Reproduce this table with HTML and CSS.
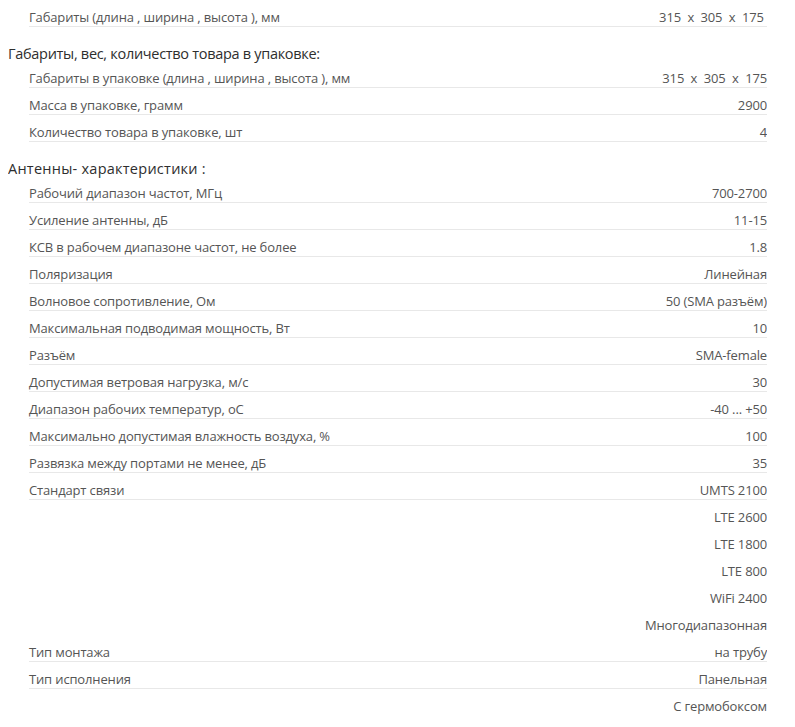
FILE: index.html
```html
<!DOCTYPE html>
<html lang="ru">
<head>
<meta charset="utf-8">
<link rel="stylesheet" href="styles.css">
</head>
<body>
<div class="specs">
  <div class="row"><span class="label">Габариты (длина , ширина , высота ), мм</span><span class="value">315 &nbsp;x &nbsp;305 &nbsp;x &nbsp;175&nbsp;</span></div>

  <h3 class="group group-tight">Габариты, вес, количество товара в упаковке:</h3>
  <div class="row"><span class="label">Габариты в упаковке (длина , ширина , высота ), мм</span><span class="value">315 &nbsp;x &nbsp;305 &nbsp;x &nbsp;175</span></div>
  <div class="row"><span class="label">Масса в упаковке, грамм</span><span class="value">2900</span></div>
  <div class="row"><span class="label">Количество товара в упаковке, шт</span><span class="value">4</span></div>

  <h3 class="group group-wide">Антенны- характеристики :</h3>
  <div class="row"><span class="label">Рабочий диапазон частот, МГц</span><span class="value">700-2700</span></div>
  <div class="row"><span class="label">Усиление антенны, дБ</span><span class="value">11-15</span></div>
  <div class="row"><span class="label">КСВ в рабочем диапазоне частот, не более</span><span class="value">1.8</span></div>
  <div class="row"><span class="label">Поляризация</span><span class="value">Линейная</span></div>
  <div class="row"><span class="label">Волновое сопротивление, Ом</span><span class="value">50 (SMA разъём)</span></div>
  <div class="row"><span class="label">Максимальная подводимая мощность, Вт</span><span class="value">10</span></div>
  <div class="row"><span class="label">Разъём</span><span class="value">SMA-female</span></div>
  <div class="row"><span class="label">Допустимая ветровая нагрузка, м/с</span><span class="value">30</span></div>
  <div class="row"><span class="label">Диапазон рабочих температур, оС</span><span class="value">-40 ... +50</span></div>
  <div class="row"><span class="label">Максимально допустимая влажность воздуха, %</span><span class="value">100</span></div>
  <div class="row"><span class="label">Развязка между портами не менее, дБ</span><span class="value">35</span></div>
  <div class="row"><span class="label">Стандарт связи</span><span class="value">UMTS 2100</span></div>
  <div class="row extra"><span class="value">LTE 2600</span></div>
  <div class="row extra"><span class="value">LTE 1800</span></div>
  <div class="row extra"><span class="value">LTE 800</span></div>
  <div class="row extra"><span class="value">WiFi 2400</span></div>
  <div class="row extra"><span class="value">Многодиапазонная</span></div>
  <div class="row"><span class="label">Тип монтажа</span><span class="value">на трубу</span></div>
  <div class="row"><span class="label">Тип исполнения</span><span class="value">Панельная</span></div>
  <div class="row extra"><span class="value">С гермобоксом</span></div>
</div>
</body>
</html>
```

FILE: styles.css
```css
html, body {
  background: #ffffff;
}
body {
  margin: 0 28px 0 8px;
  font-family: "Open Sans", "DejaVu Sans", sans-serif;
  color: #555555;
}
.specs {
  display: flex;
  flex-direction: column;
}
.group {
  margin: 0;
  padding: 19px 0 0;
  font-size: 14.5px;
  line-height: 15px;
  letter-spacing: -0.1px;
  font-weight: normal;
  color: #2e2e2e;
}
.group-tight {
  letter-spacing: -0.3px;
}
.group-wide {
  letter-spacing: 0.25px;
}
.row {
  display: flex;
  justify-content: space-between;
  margin-left: 21px;
  padding: 8px 0 0;
  font-size: 13px;
  line-height: 18px;
  letter-spacing: -0.15px;
  border-bottom: 1px solid #e8e8e8;
}
.row.extra {
  border-bottom-color: transparent;
  justify-content: flex-end;
}
.label {
  white-space: nowrap;
}
.value {
  white-space: nowrap;
  text-align: right;
}
```
